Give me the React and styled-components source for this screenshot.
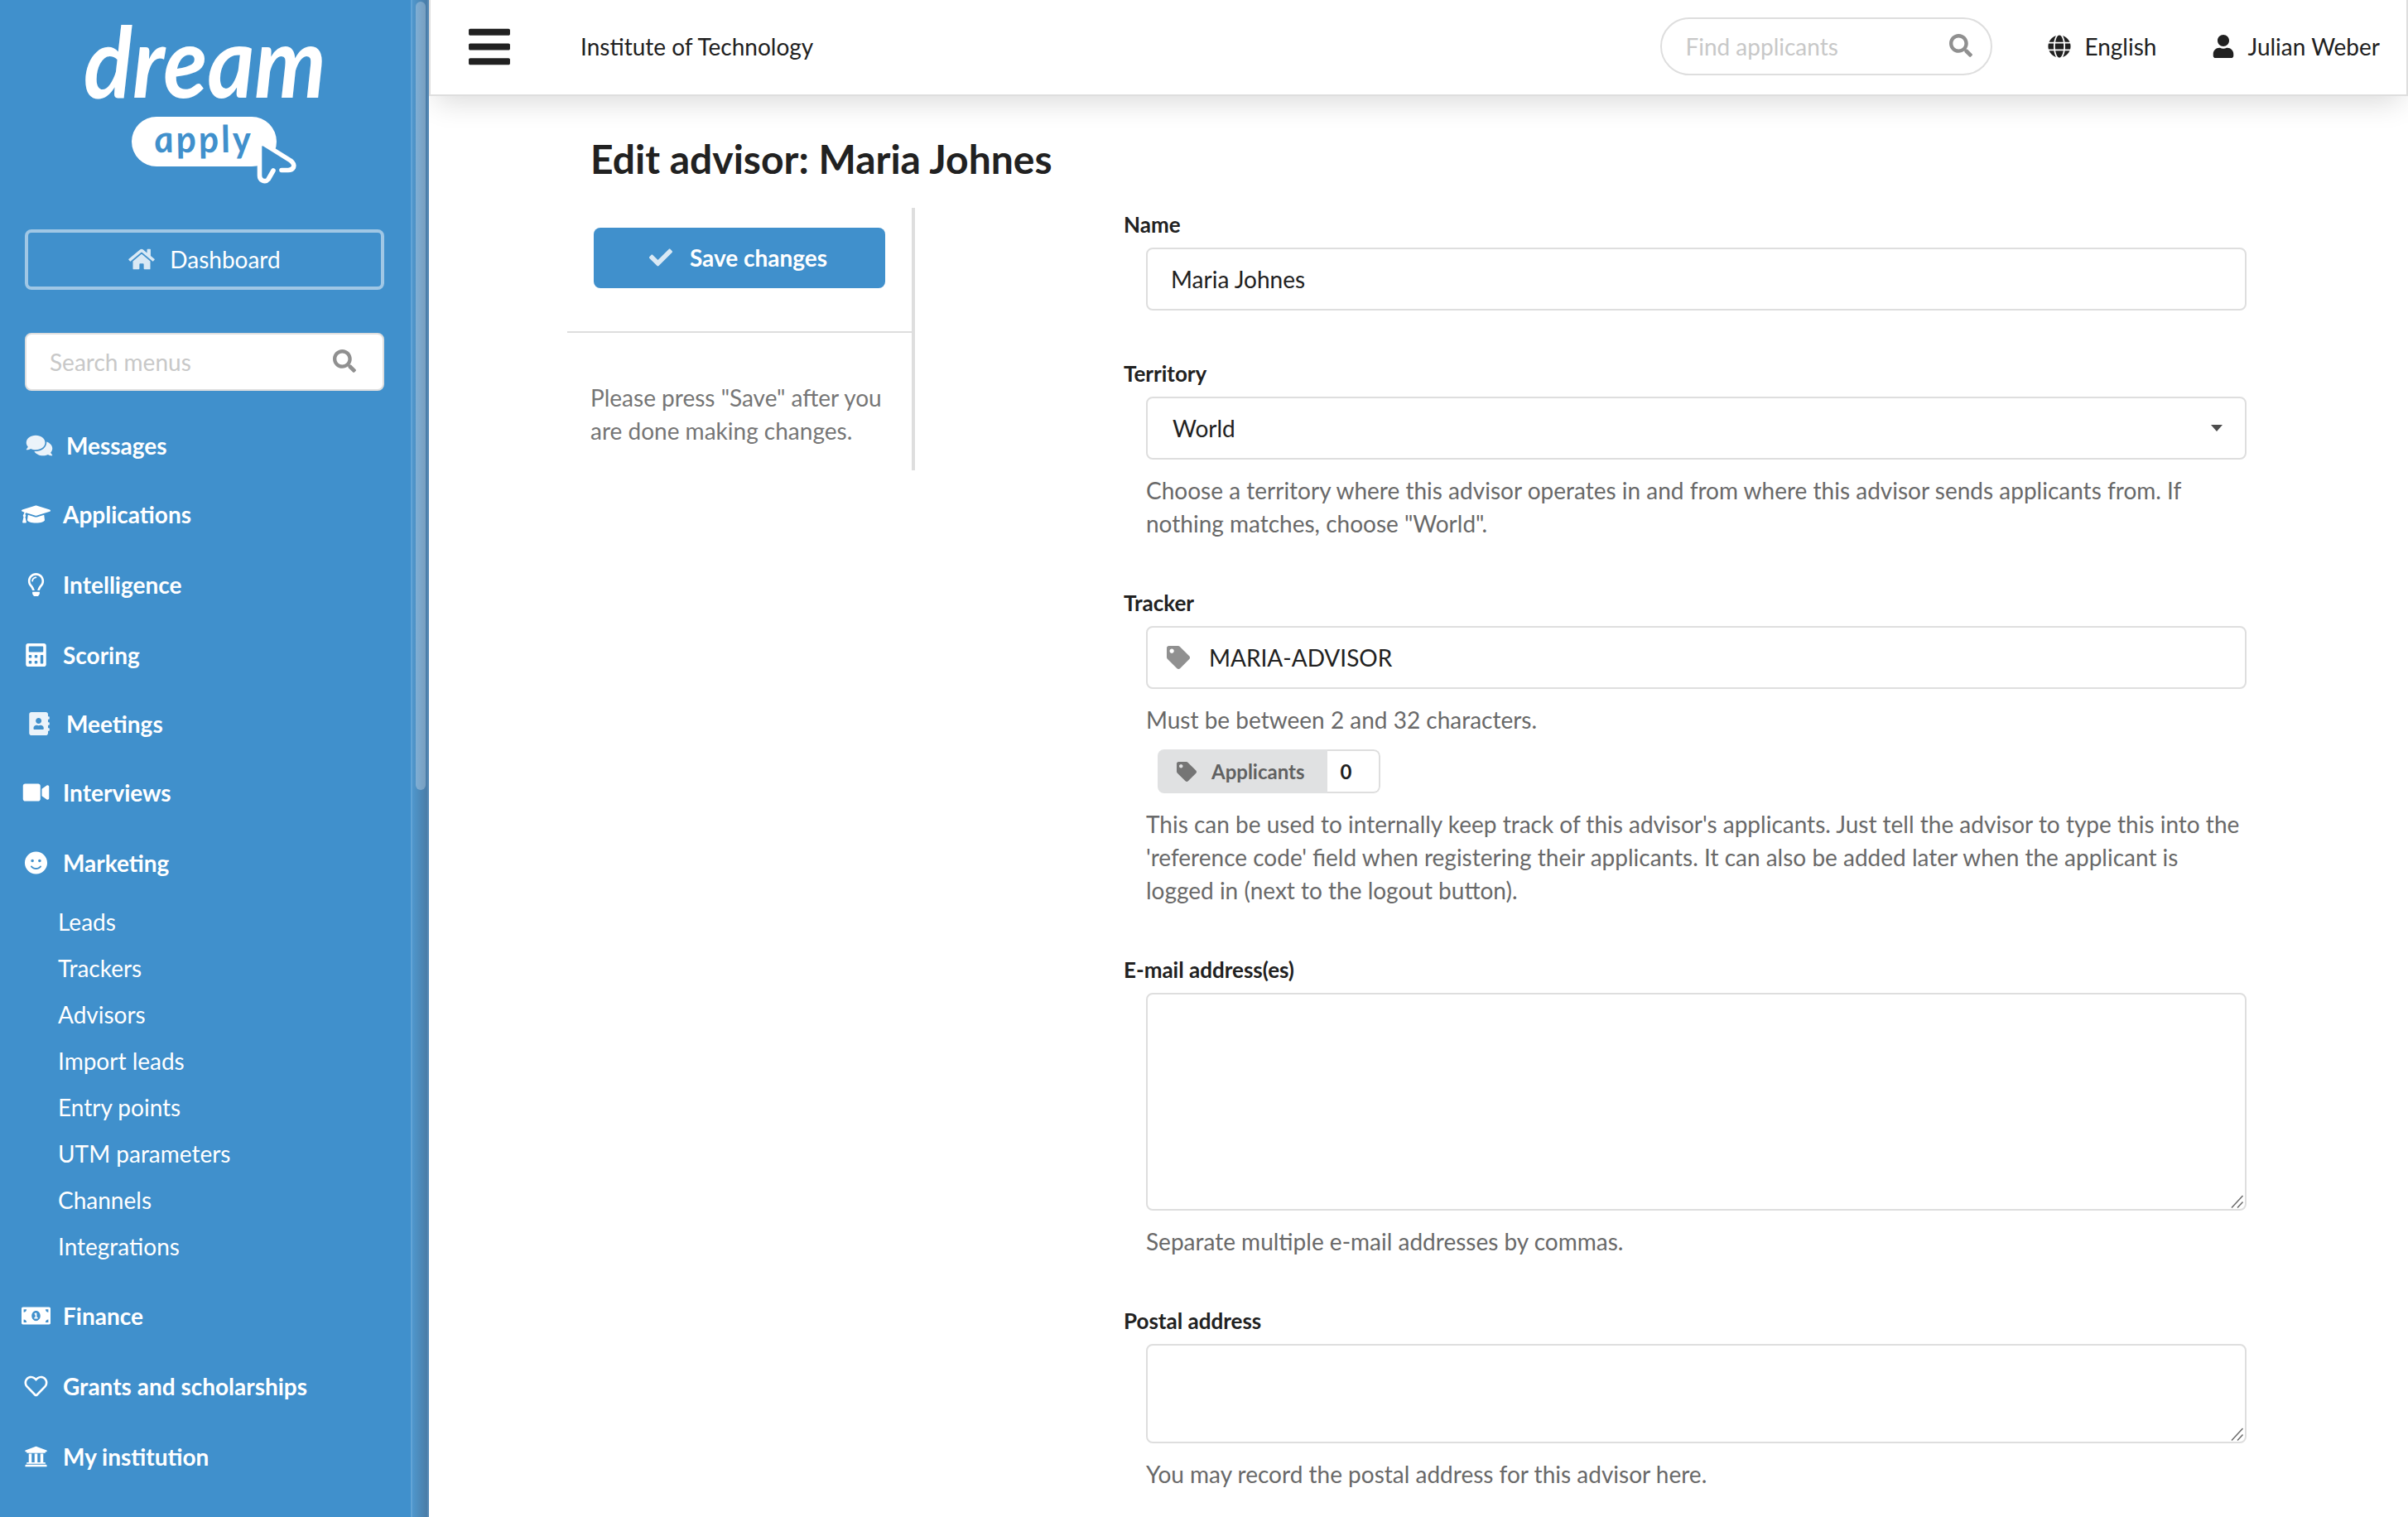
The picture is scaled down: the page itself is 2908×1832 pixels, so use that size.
import React from 'react';
import styled, {createGlobalStyle} from 'styled-components';
import {
    FaAddressBook,
    FaBars,
    FaCalculator,
    FaCheck,
    FaComments,
    FaGlobe,
    FaGraduationCap,
    FaHome,
    FaMoneyBillAlt,
    FaRegHeart,
    FaRegLightbulb,
    FaSearch,
    FaSmile,
    FaTag,
    FaUniversity,
    FaUser,
    FaVideo,
} from 'react-icons/fa';

// gap is the space above the row
const topMenu = [
    {label: 'Messages', icon: FaComments, gap: 0, offset: 4, faded: true},
    {label: 'Applications', icon: FaGraduationCap, gap: 43},
    {label: 'Intelligence', icon: FaRegLightbulb, gap: 45},
    {label: 'Scoring', icon: FaCalculator, gap: 45},
    {label: 'Meetings', icon: FaAddressBook, gap: 43, offset: 4, faded: true},
    {label: 'Interviews', icon: FaVideo, gap: 43},
    {label: 'Marketing', icon: FaSmile, gap: 45},
];

const subMenu = [
    'Leads',
    'Trackers',
    'Advisors',
    'Import leads',
    'Entry points',
    'UTM parameters',
    'Channels',
    'Integrations',
];

const bottomMenu = [
    {label: 'Finance', icon: FaMoneyBillAlt, gap: 0},
    {label: 'Grants and scholarships', icon: FaRegHeart, gap: 45},
    {label: 'My institution', icon: FaUniversity, gap: 45},
];

const Logo = () => (
    <LogoSvg width="300" height="230" viewBox="96 0 300 230">
        <DreamText x="101" y="118" textLength="293" lengthAdjust="spacingAndGlyphs">dream</DreamText>
        <rect x="159" y="141" width="175" height="60" rx="30" fill="#fff" />
        <g transform="translate(188 184) skewX(8)">
            <ApplyText x="0" y="0" textLength="117">apply</ApplyText>
        </g>
        <path
            d="M330 206 L324 216.5 Q321 220 317 218 Q313.500 216.500 313.500 212 V177 Q314 172 319 174 L351 194 Q356 198 354.500 202 Q352.500 205.500 348 205.500 H340"
            fill="#4090cc"
            stroke="#fff"
            strokeWidth="5.600"
            strokeLinecap="round"
            strokeLinejoin="round"
        />
    </LogoSvg>
);

const MenuRow = ({item}) => {
    const Icon = item.icon;
    return (
        <MenuItem href="#" $gap={item.gap} $offset={item.offset || 0}>
            <MenuIcon $faded={item.faded}><Icon /></MenuIcon>
            {item.label}
        </MenuItem>
    );
};

const Resizer = () => (
    <ResizeGrip width="16" height="16" viewBox="0 0 16 16">
        <path d="M1 15.500 L14.500 1 M8 15.500 L14.500 8.500" stroke="#6b6b6b" strokeWidth="1.500" fill="none" />
    </ResizeGrip>
);

const Sidebar = () => (
    <SidebarWrap>
        <SidebarBody>
            <Logo />
            <DashboardButton href="#">
                <FaHome />
                Dashboard
            </DashboardButton>
            <MenuSearch>
                Search menus
                <FaSearch />
            </MenuSearch>
            {topMenu.map(item => <MenuRow key={item.label} item={item} />)}
            <SubMenu>
                {subMenu.map(label => <SubItem key={label} href="#">{label}</SubItem>)}
            </SubMenu>
            {bottomMenu.map(item => <MenuRow key={item.label} item={item} />)}
        </SidebarBody>
        <Rail>
            <Thumb />
        </Rail>
    </SidebarWrap>
);

const Topbar = () => (
    <Header>
        <Burger><FaBars /></Burger>
        <Institution>Institute of Technology</Institution>
        <ApplicantSearch>
            Find applicants
            <FaSearch />
        </ApplicantSearch>
        <Language href="#"><FaGlobe />English</Language>
        <Account href="#"><FaUser />Julian Weber</Account>
    </Header>
);

export default function App() {
    return (
        <Page>
            <GlobalStyle />
            <Sidebar />
            <Main>
                <Topbar />
                <Title>Edit advisor: Maria Johnes</Title>
                <Columns>
                    <Actions>
                        <SaveArea>
                            <SaveButton><FaCheck />Save changes</SaveButton>
                        </SaveArea>
                        <SaveHint>Please press "Save" after you are done making changes.</SaveHint>
                    </Actions>
                    <Form>
                        <Field>
                            <Label>Name</Label>
                            <Input>Maria Johnes</Input>
                        </Field>
                        <Field>
                            <Label>Territory</Label>
                            <Select>World<Caret /></Select>
                            <Help>
                                Choose a territory where this advisor operates in and from where this
                                advisor sends applicants from. If nothing matches, choose "World".
                            </Help>
                        </Field>
                        <Field>
                            <Label>Tracker</Label>
                            <IconInput><FaTag />MARIA-ADVISOR</IconInput>
                            <Help>Must be between 2 and 32 characters.</Help>
                            <Counter>
                                <CounterName><FaTag />Applicants</CounterName>
                                <CounterValue>0</CounterValue>
                            </Counter>
                            <Help>
                                This can be used to internally keep track of this advisor's applicants. Just
                                tell the advisor to type this into the 'reference code' field when registering
                                their applicants. It can also be added later when the applicant is logged in
                                (next to the logout button).
                            </Help>
                        </Field>
                        <Field>
                            <Label>E-mail address(es)</Label>
                            <TextArea $height={263}><Resizer /></TextArea>
                            <Help>Separate multiple e-mail addresses by commas.</Help>
                        </Field>
                        <Field>
                            <Label>Postal address</Label>
                            <TextArea $height={120}><Resizer /></TextArea>
                            <Help>You may record the postal address for this advisor here.</Help>
                        </Field>
                    </Form>
                </Columns>
            </Main>
        </Page>
    );
}

const GlobalStyle = createGlobalStyle`
    * {
        box-sizing: border-box;
    }
    body {
        margin: 0;
        background: #fff;
        color: #212121;
        font-family: Lato, 'Liberation Sans', sans-serif;
        font-size: 28px;
        line-height: 40px;
        overflow: hidden;
    }
    a {
        color: inherit;
        text-decoration: none;
    }
    svg {
        flex: none;
        display: block;
    }
`;

const Page = styled.div`
    display: flex;
    width: 2908px;
    height: 1832px;
    overflow: hidden;
`;

const SidebarWrap = styled.nav`
    display: flex;
    flex: none;
    width: 518px;
    background: #4090cc;
    color: #fff;
    z-index: 1;
`;

const SidebarBody = styled.div`
    display: flex;
    flex-direction: column;
    width: 496px;
    padding: 0 32px 0 30px;
`;

const Rail = styled.div`
    width: 22px;
    padding: 2px 2px 0 4px;
    border-left: 2px solid #62a4d6;
    border-right: 2px solid #5589b5;
    background: linear-gradient(to right, #4f97cd, #4a7ca6);
`;

const Thumb = styled.div`
    width: 12px;
    height: 952px;
    border-radius: 6px;
    background: linear-gradient(to right, #7faed4, #789fc0);
`;

const LogoSvg = styled.svg`
    margin-left: 66px;
    overflow: visible;
`;

const DreamText = styled.text`
    font-family: Lato, sans-serif;
    font-style: italic;
    font-weight: 700;
    font-size: 119px;
    fill: #fff;
`;

const ApplyText = styled.text`
    font-family: Lato, sans-serif;
    font-style: italic;
    font-weight: 700;
    font-size: 45px;
    fill: #4090cc;
`;

const DashboardButton = styled.a`
    display: flex;
    align-items: center;
    justify-content: center;
    gap: 18px;
    height: 73px;
    margin-top: 47px;
    padding-bottom: 2px;
    border: 4px solid #a0c7e5;
    border-radius: 8px;
    svg {
        width: 32px;
        height: 28px;
        color: #d9e9f5;
    }
`;

const MenuSearch = styled.div`
    display: flex;
    align-items: center;
    justify-content: space-between;
    height: 70px;
    margin: 52px 0 46px;
    padding: 0 32px 0 28px;
    border: 2px solid #dedede;
    border-radius: 8px;
    background: #fff;
    color: #c8c8c8;
    svg {
        color: #909090;
        margin-top: -2px;
    }
`;

const MenuItem = styled.a`
    display: flex;
    align-items: center;
    flex: none;
    height: 40px;
    margin-top: ${props => props.$gap}px;
    margin-left: ${props => props.$offset - 5}px;
    font-weight: bold;
`;

const MenuIcon = styled.span`
    display: flex;
    justify-content: center;
    width: 36px;
    margin-right: 15px;
    color: ${props => props.$faded ? '#ebf3fa' : '#fff'};
    svg {
        width: 35px;
        height: 28px;
    }
`;

const SubMenu = styled.div`
    display: flex;
    flex-direction: column;
    margin: 23px 0 36px 40px;
`;

const SubItem = styled.a`
    height: 56px;
    line-height: 56px;
`;

const Main = styled.main`
    flex: 1;
    min-width: 0;
`;

const Header = styled.header`
    display: flex;
    align-items: center;
    height: 116px;
    padding: 0 32px 2px 46px;
    border: 2px solid #dedede;
    border-top: none;
    background: #fff;
    box-shadow: 0 16px 32px -8px rgba(0, 0, 0, 0.14);
`;

const Burger = styled.button`
    display: flex;
    width: 50px;
    margin-right: 85px;
    padding: 0;
    border: none;
    background: none;
    color: #212121;
    svg {
        width: 50px;
        height: 57px;
    }
`;

const Institution = styled.div`
    flex: 1;
`;

const ApplicantSearch = styled.div`
    display: flex;
    align-items: center;
    justify-content: space-between;
    width: 401px;
    height: 70px;
    padding: 0 22px 0 28px;
    border: 2px solid #dedede;
    border-radius: 35px;
    color: #c8c8c8;
    svg {
        color: #909090;
        margin-top: -2px;
    }
`;

const HeaderLink = styled.a`
    display: flex;
    align-items: center;
    svg {
        width: 28px;
        height: 28px;
    }
`;

const Language = styled(HeaderLink)`
    margin-left: 67px;
    gap: 16px;
`;

const Account = styled(HeaderLink)`
    margin-left: 67px;
    gap: 15px;
`;

const Title = styled.h1`
    margin: 46px 0 0 195px;
    font-size: 48px;
    line-height: 60px;
`;

const Columns = styled.div`
    display: flex;
    align-items: flex-start;
    margin: 29px 195px 0 167px;
`;

const Actions = styled.aside`
    width: 420px;
    height: 317px;
    border-right: 4px solid #dedede;
`;

const SaveArea = styled.div`
    height: 151px;
    padding: 24px 32px 0;
    border-bottom: 2px solid #dedede;
`;

const SaveButton = styled.button`
    display: flex;
    align-items: center;
    justify-content: center;
    gap: 21px;
    width: 352px;
    height: 73px;
    padding: 0 3px 2px 0;
    border: none;
    border-radius: 8px;
    background: #4090cc;
    color: #fff;
    font: bold 28px Lato, sans-serif;
    svg {
        color: #d9e9f5;
    }
`;

const SaveHint = styled.p`
    margin: 58px 20px 0 28px;
    color: #767676;
`;

const Form = styled.form`
    display: flex;
    flex-direction: column;
    flex: 1;
    gap: 57px;
    margin-left: 252px;
    padding-top: 1px;
`;

const Field = styled.div`
    display: flex;
    flex-direction: column;
    padding-left: 27px;
`;

const Label = styled.label`
    margin: 0 0 9px -27px;
    font-size: 26px;
    font-weight: bold;
    line-height: 38px;
`;

const Input = styled.div`
    display: flex;
    align-items: center;
    height: 76px;
    padding: 0 27px 0 28px;
    border: 2px solid #dedede;
    border-radius: 8px;
`;

const Select = styled(Input)`
    justify-content: space-between;
    padding-left: 30px;
`;

const Caret = styled.span`
    border: 7px solid transparent;
    border-top: 8px solid #4d4d4d;
    border-bottom: none;
`;

const IconInput = styled(Input)`
    gap: 23px;
    padding-left: 23px;
    svg {
        color: #909090;
    }
`;

const TextArea = styled.div`
    display: flex;
    align-items: flex-end;
    justify-content: flex-end;
    height: ${props => props.$height}px;
    border: 2px solid #dedede;
    border-radius: 8px;
`;

const ResizeGrip = styled.svg`
    margin: 0 1px 1px 0;
`;

const Help = styled.p`
    margin: 17px 0 0;
    color: #696969;
`;

const Counter = styled.div`
    display: flex;
    align-self: flex-start;
    height: 53px;
    margin: 16px 0 0 14px;
    border-radius: 8px;
    overflow: hidden;
    font-size: 24px;
    font-weight: bold;
`;

const CounterName = styled.div`
    display: flex;
    align-items: center;
    gap: 18px;
    padding: 0 27px 0 23px;
    background: #e0e1e2;
    color: #616161;
    svg {
        color: #757575;
    }
`;

const CounterValue = styled.div`
    display: flex;
    align-items: center;
    width: 64px;
    padding-left: 16px;
    border: 2px solid #dedede;
    border-left: none;
    border-radius: 0 8px 8px 0;
`;
